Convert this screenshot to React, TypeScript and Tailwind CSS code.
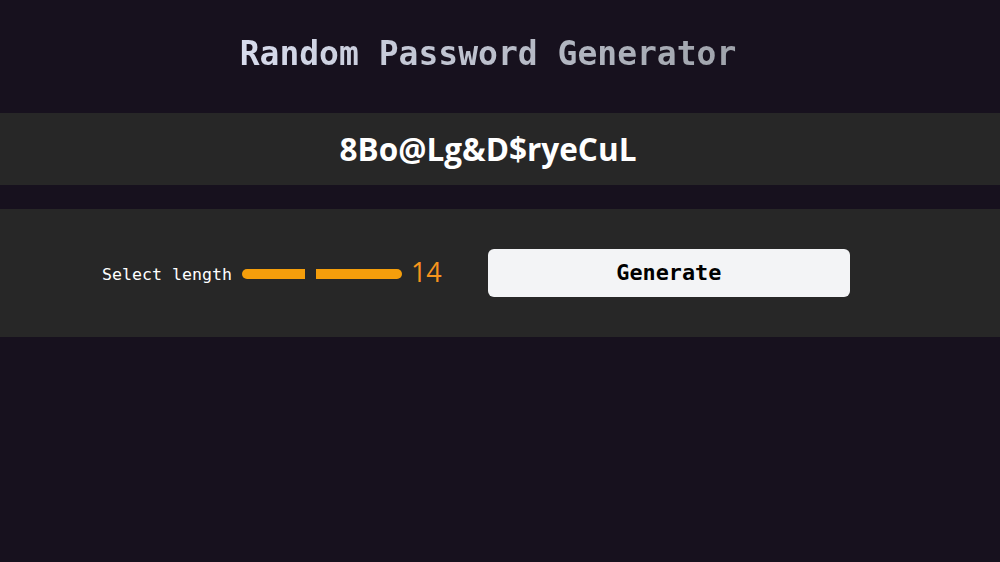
import React, { useState } from 'react';

export default function App() {
  const [length] = useState(14);
  const [password] = useState('8Bo@Lg&D$ryeCuL');

  return (
    <div className="min-h-[562px] w-full bg-[#17111e]">
      {/* Title */}
      <div className="h-[113px] flex items-center justify-center pr-6 pb-[6px]">
        <h1
          className="text-[33px] font-semibold bg-gradient-to-r from-[#d8dced] to-[#9fa3ab] bg-clip-text text-transparent"
          style={{ fontFamily: '"DejaVu Sans Mono", monospace' }}
        >
          Random Password Generator
        </h1>
      </div>

      {/* Password output */}
      <div className="h-[72px] bg-[#272727] flex items-center justify-center pr-6">
        <span
          className="text-[31.5px] font-bold text-white"
          style={{ fontFamily: '"Open Sans", sans-serif' }}
        >
          {password}
        </span>
      </div>

      {/* Settings */}
      <div className="mt-6 h-[128px] bg-[#272727] flex items-center pl-[102px]">
        <div className="flex items-center">
          <span
            className="pt-[5px] text-[16.6px] text-white"
            style={{ fontFamily: '"DejaVu Sans Mono", monospace' }}
          >
            Select length
          </span>
          <div className="ml-[10px] mt-[2px] flex items-center h-[10px] w-[160px]">
            <div className="h-full w-[63px] bg-[#f59e0b] rounded-l-full" />
            <div className="h-full w-[11px] bg-[#272727]" />
            <div className="h-full flex-1 bg-[#f59e0b] rounded-r-full" />
          </div>
          <span
            className="ml-[9px] mb-[2px] text-[27px] text-[#f7941d] leading-none"
            style={{ fontFamily: '"Open Sans", sans-serif' }}
          >
            {length}
          </span>
        </div>
        <button
          className="ml-[46px] w-[362px] h-[48px] bg-[#f3f4f6] rounded-md text-[21.8px] font-bold text-black"
          style={{ fontFamily: '"DejaVu Sans Mono", monospace' }}
        >
          Generate
        </button>
      </div>
    </div>
  );
}
